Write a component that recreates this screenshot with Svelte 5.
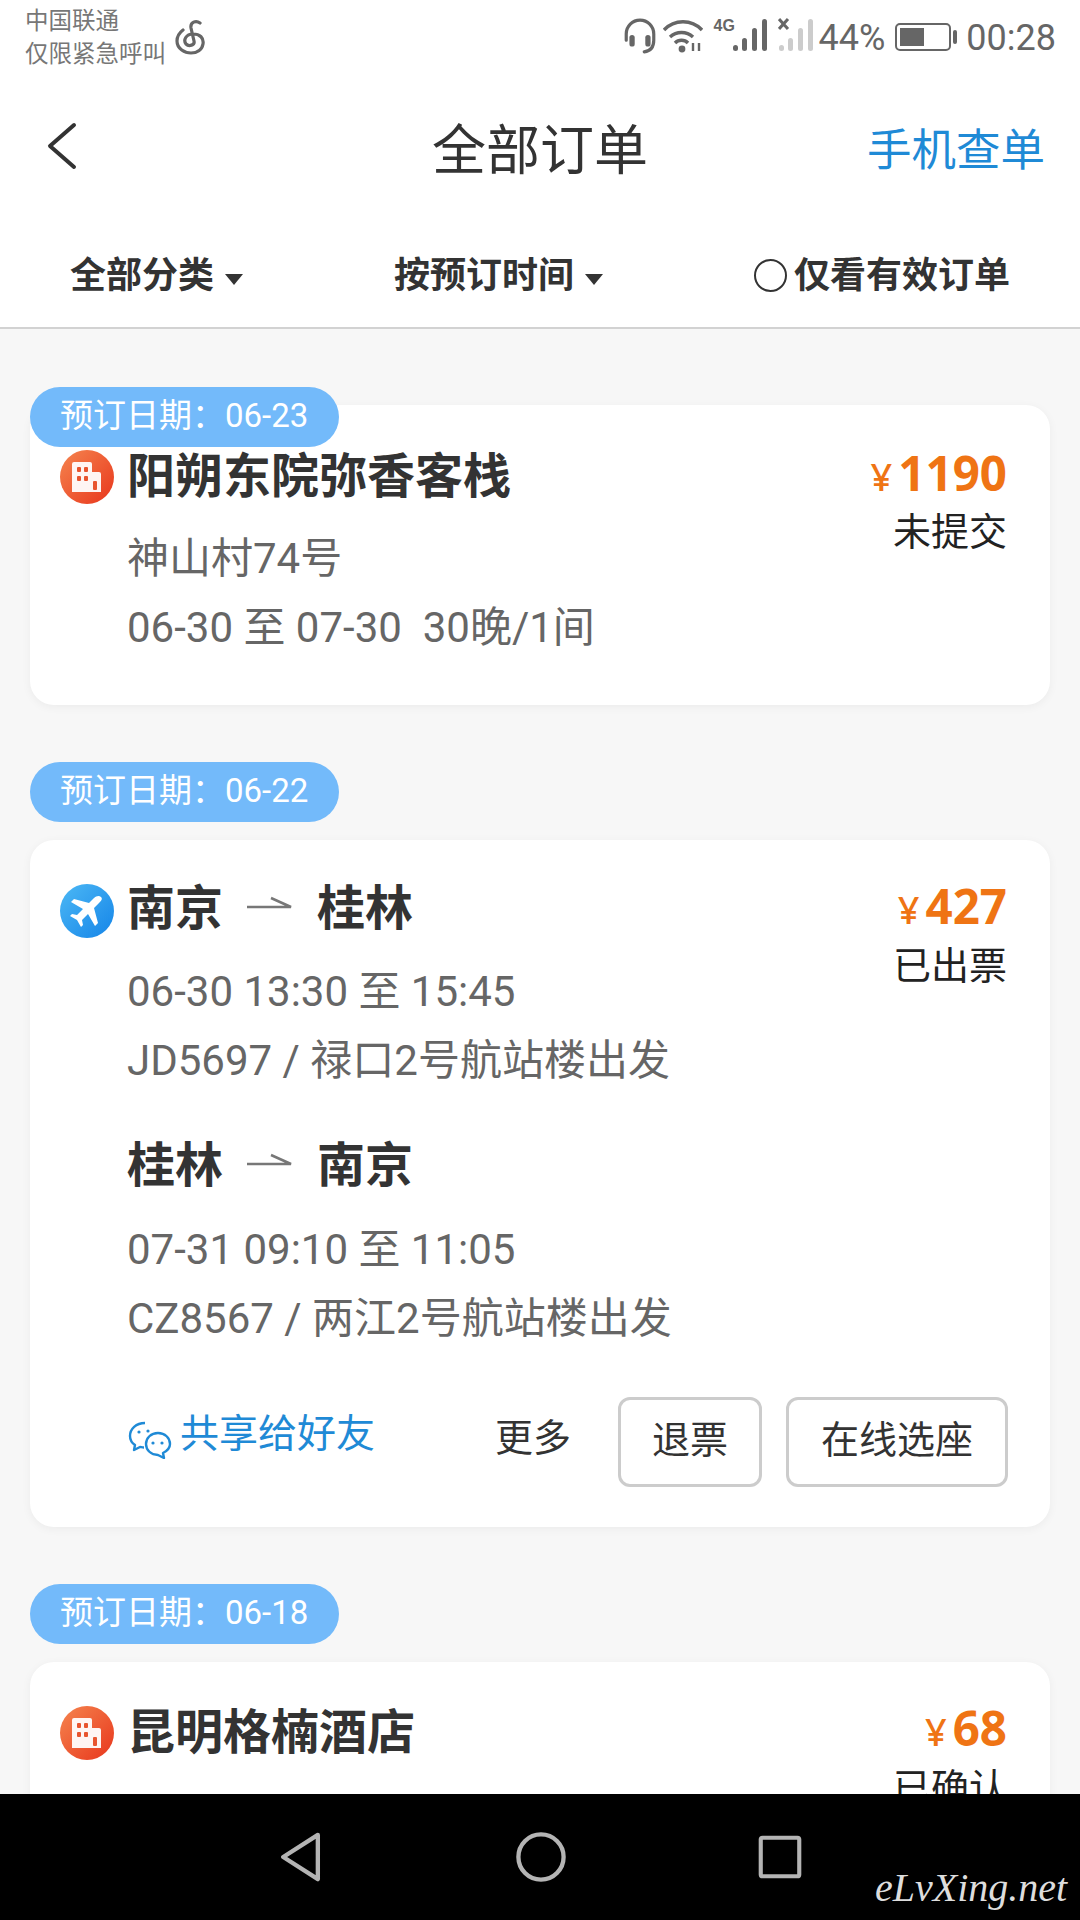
<script lang="ts">
  // Order list page: status bar, title bar, filters, cards, system nav.
  interface Leg { from: string; to: string; lines: string[] }
  const flightLegs: Leg[] = [
    { from: "南京", to: "桂林", lines: ["06-30 13:30 至 15:45", "JD5697 / 禄口2号航站楼出发"] },
    { from: "桂林", to: "南京", lines: ["07-31 09:10 至 11:05", "CZ8567 / 两江2号航站楼出发"] },
  ];
</script>

{#snippet hotelIcon()}
  <svg class="type-icon" viewBox="0 0 54 54">
    <defs>
      <linearGradient id="hotel-grad" x1="0" y1="0" x2="1" y2="1">
        <stop offset="0" stop-color="#f5854f" />
        <stop offset="1" stop-color="#e8361c" />
      </linearGradient>
    </defs>
    <circle cx="27" cy="27" r="27" fill="url(#hotel-grad)" />
    <path d="M12 14q0-2 2-2h16q2 0 2 2v8h7q2 0 2 2v18H12z" fill="#fff" fill-opacity=".94" />
    <g fill="#e8552f">
      <rect x="17" y="17" width="4" height="5" rx="1" /><rect x="24" y="17" width="4" height="5" rx="1" />
      <rect x="17" y="26" width="4" height="5" rx="1" /><rect x="24" y="26" width="4" height="5" rx="1" />
      <rect x="33" y="31" width="4" height="9" rx="1" />
    </g>
  </svg>
{/snippet}

{#snippet legArrow()}
  <svg class="leg-arrow" viewBox="0 0 46 16">
    <path d="M0 11h44L24 2" fill="none" stroke="#777" stroke-width="2.5" />
  </svg>
{/snippet}

<div class="page">
  <header class="status">
    <div class="carrier">
      <span>中国联通</span>
      <span>仅限紧急呼叫</span>
    </div>
    <svg class="music" viewBox="0 0 36 36">
      <path d="M27 4c-4-3-10-1-9 5l3 13c1 4-5 6-8 3-3-4 0-10 7-10 7 0 11 4 10 10-1 6-6 9-12 9S4 30 4 22c0-4 2-8 6-11" fill="none" stroke="#666" stroke-width="3.2" stroke-linecap="round" />
    </svg>
    <div class="status-right">
      <svg class="st-headset" viewBox="0 0 32 34">
        <path d="M3 21v-6a13 13 0 0 1 26 0v6c0 6-2 10-9 11" fill="none" stroke="#666" stroke-width="3" stroke-linecap="round" />
        <rect x="6" y="16" width="5" height="11" rx="2.5" fill="#666" />
        <rect x="21" y="16" width="5" height="11" rx="2.5" fill="#666" />
      </svg>
      <svg class="st-wifi" viewBox="0 0 40 34">
        <g fill="none" stroke="#666" stroke-width="3.4">
          <path d="M1 11a26 26 0 0 1 38 0" />
          <path d="M7 18a17 17 0 0 1 23 0" />
          <path d="M12 24a9 9 0 0 1 13 0" />
        </g>
        <circle cx="19" cy="30" r="3.4" fill="#666" />
        <path d="M30 24v8M36 24v8" stroke="#666" stroke-width="2.4" />
      </svg>
      <div class="st-signal">
        <span class="st-4g">4G</span>
        <svg viewBox="0 0 36 34" class="st-bars">
          <g fill="#666"><rect x="1" y="27" width="5" height="6" rx="2.5" /><rect x="10" y="20" width="5" height="13" rx="2.5" /><rect x="20" y="10" width="5" height="23" rx="2.5" /><rect x="30" y="1" width="5" height="32" rx="2.5" /></g>
        </svg>
      </div>
      <svg class="st-bars st-off" viewBox="0 0 36 34">
        <path d="M1 1l9 10M10 1L1 11" stroke="#666" stroke-width="3" />
        <g fill="#ccc"><rect x="1" y="27" width="5" height="6" rx="2.5" /><rect x="10" y="20" width="5" height="13" rx="2.5" /><rect x="20" y="10" width="5" height="23" rx="2.5" /><rect x="30" y="1" width="5" height="32" rx="2.5" /></g>
      </svg>
      <span class="st-text">44%</span>
      <div class="battery"><div class="battery-fill"></div></div>
      <div class="battery-nub"></div>
      <span class="st-text st-time">00:28</span>
    </div>
  </header>

  <div class="titlebar">
    <svg class="back" viewBox="0 0 30 48">
      <path d="M27 3L3 24l24 21" fill="none" stroke="#333" stroke-width="4" stroke-linecap="round" stroke-linejoin="round" />
    </svg>
    <h1>全部订单</h1>
    <span class="title-link">手机查单</span>
  </div>

  <div class="filters">
    <span class="filter">全部分类<i class="caret"></i></span>
    <span class="filter">按预订时间<i class="caret"></i></span>
    <span class="filter check"><i class="radio"></i>仅看有效订单</span>
  </div>

  <main class="list">
    <section class="group first">
      <div class="pill">预订日期：06-23</div>
      <article class="card">
        <div class="head">
          {@render hotelIcon()}
          <h2>阳朔东院弥香客栈</h2>
          <div class="price"><small>¥</small>1190</div>
        </div>
        <div class="body">
          <div class="status-label">未提交</div>
          <p>神山村74号</p>
          <p class="pre">06-30 至 07-30  30晚/1间</p>
        </div>
      </article>
    </section>

    <section class="group">
      <div class="pill">预订日期：06-22</div>
      <article class="card">
        {#each flightLegs as leg, i}
          <div class="head" class:leg-next={i > 0}>
            {#if i === 0}
              <svg class="type-icon" viewBox="0 0 54 54">
                <defs>
                  <linearGradient id="plane-grad" x1="0" y1="0" x2="1" y2="1">
                    <stop offset="0" stop-color="#4cb8f5" />
                    <stop offset="1" stop-color="#1585e8" />
                  </linearGradient>
                </defs>
                <circle cx="27" cy="27" r="27" fill="url(#plane-grad)" />
                <path d="M41 13c-2-2-5-1-7 1l-5 5-15-4-3 3 12 7-6 6-5-1-2 2 7 4 4 7 2-2-1-5 6-6 7 12 3-3-4-15 5-5c2-2 4-4 2-6z" fill="#fff" />
              </svg>
            {/if}
            <h2 class="route"><span>{leg.from}</span>{@render legArrow()}<span>{leg.to}</span></h2>
            {#if i === 0}
              <div class="price"><small>¥</small>427</div>
            {/if}
          </div>
          <div class="body">
            {#if i === 0}
              <div class="status-label">已出票</div>
            {/if}
            {#each leg.lines as line}
              <p>{line}</p>
            {/each}
          </div>
        {/each}
        <div class="actions">
          <span class="share">
            <svg viewBox="0 0 44 38" class="share-icon">
              <g fill="none" stroke="#1f8ad6" stroke-width="2.4" stroke-linejoin="round">
                <path d="M17 2C8 2 2 8 2 15c0 4 2 7 5 9l-1 5 6-3c1 0 2 .5 4 .5" />
                <path d="M30 12c-7 0-12 5-12 11s5 11 12 11l6 3-1-5c4-2 7-5 7-9 0-6-5-11-12-11z" fill="#fff" />
              </g>
              <g fill="#1f8ad6"><circle cx="11" cy="11" r="1.6" /><circle cx="20" cy="10" r="1.6" /><circle cx="25" cy="22" r="1.6" /><circle cx="34" cy="22" r="1.6" /></g>
            </svg>
            共享给好友
          </span>
          <span class="more">更多</span>
          <button type="button" class="btn btn-refund">退票</button>
          <button type="button" class="btn btn-seat">在线选座</button>
        </div>
      </article>
    </section>

    <section class="group">
      <div class="pill">预订日期：06-18</div>
      <article class="card">
        <div class="head">
          {@render hotelIcon()}
          <h2>昆明格楠酒店</h2>
          <div class="price"><small>¥</small>68</div>
        </div>
        <div class="body">
          <div class="status-label">已确认</div>
        </div>
      </article>
    </section>
  </main>

  <footer class="sysnav">
    <svg class="nav-back" viewBox="0 0 46 52">
      <path d="M40 3L4 26l36 23z" fill="none" stroke="#b4b4b4" stroke-width="4.5" stroke-linejoin="round" />
    </svg>
    <svg class="nav-home" viewBox="0 0 52 52">
      <circle cx="26" cy="26" r="23.5" fill="none" stroke="#b4b4b4" stroke-width="4.5" />
    </svg>
    <svg class="nav-recent" viewBox="0 0 48 48">
      <rect x="3" y="3" width="42" height="42" rx="2" fill="none" stroke="#b4b4b4" stroke-width="4.5" />
    </svg>
    <span class="watermark">eLvXing.net</span>
  </footer>
</div>

<style>
  :global(body) { margin: 0; background: #f7f7f7; }
  .page { width: 1080px; height: 1920px; display: flex; flex-direction: column; overflow: hidden; background: #f7f7f7; font-family: Roboto, "Noto Sans CJK SC", sans-serif; color: #333; }

  .status { flex: none; height: 84px; background: #fff; display: flex; align-items: flex-start; padding: 0 24px 0 25px; box-sizing: border-box; color: #666; }
  .carrier { display: flex; flex-direction: column; font-size: 23.5px; line-height: 33px; padding-top: 5px; color: #777; }
  .music { width: 36px; height: 36px; margin: 19px 0 0 7px; }
  .status-right { margin-left: auto; display: flex; align-items: flex-start; padding-top: 18px; }
  .st-headset { width: 36px; height: 36px; }
  .st-wifi { width: 40px; height: 36px; margin-left: 5px; }
  .st-signal { position: relative; width: 54px; height: 34px; margin-left: 11px; display: flex; justify-content: flex-end; }
  .st-4g { position: absolute; left: 0; top: 0; font-size: 16px; line-height: 16px; font-weight: 700; font-family: "Liberation Sans", sans-serif; color: #666; }
  .st-bars { width: 36px; height: 34px; }
  .st-off { margin-left: 10px; }
  .st-text { font-size: 36px; line-height: 40px; margin-left: 5px; color: #666; }
  .battery { width: 56px; height: 28px; margin: 5px 0 0 10px; border: 2px solid #666; border-radius: 5px; box-sizing: border-box; padding: 3px; background: #fff; }
  .battery-fill { width: 24px; height: 100%; background: #666; }
  .battery-nub { width: 4px; height: 14px; margin: 12px 0 0 2px; background: #666; border-radius: 2px; }
  .st-time { margin-left: 9px; }

  .titlebar { flex: none; height: 128px; background: #fff; position: relative; display: flex; align-items: center; justify-content: space-between; padding: 0 35px 4px 47px; box-sizing: border-box; }
  .back { width: 30px; height: 48px; }
  h1 { position: absolute; left: 0; right: 0; margin: 0; text-align: center; font-size: 54px; font-weight: 400; color: #333; }
  .title-link { font-size: 44.5px; color: #1f8ad6; }

  .filters { flex: none; height: 117px; padding: 4px 70px 0 70px; background: #fff; border-bottom: 2px solid #d2d2d2; display: flex; align-items: center; justify-content: space-between; box-sizing: border-box; }
  .filter { display: flex; align-items: center; font-size: 36px; font-weight: 700; color: #333; }
  .caret { width: 0; height: 0; margin: 15px 0 0 11px; border-left: 9px solid transparent; border-right: 9px solid transparent; border-top: 11px solid #333; }
  .radio { width: 33px; height: 33px; margin: 7px 7px 0 0; border: 2px solid #333; border-radius: 50%; box-sizing: border-box; }

  .list { flex: 1; min-height: 0; overflow: hidden; padding: 58px 30px 0; display: flex; flex-direction: column; gap: 57px; }
  .group { flex: none; display: flex; flex-direction: column; align-items: flex-start; gap: 18px; }
  .group.first { gap: 0; }
  .group.first .card { margin-top: -42px; padding-bottom: 43px; }
  .pill { position: relative; z-index: 1; width: 309px; height: 60px; padding-left: 30px; box-sizing: border-box; border-radius: 30px; background: #73bafa; color: #fff; font-size: 33px; line-height: 57px; }

  .card { width: 100%; padding: 33px 43px 40px 30px; box-sizing: border-box; background: #fff; border-radius: 24px; box-shadow: 0 2px 10px rgba(0, 0, 0, .05); }
  .group.first .head { margin-top: 1px; }
  .head { display: flex; align-items: center; height: 66px; padding-left: 67px; position: relative; }
  .leg-next { margin-top: 35px; }
  .type-icon { position: absolute; left: 0; top: 11px; width: 54px; height: 54px; }
  h2 { margin: 0; font-size: 48px; font-weight: 700; color: #333; white-space: nowrap; }
  .route { display: flex; align-items: center; margin-top: -4px; }
  .leg-arrow { width: 46px; height: 16px; margin: 0 24px 0 24px; }
  .price { margin-left: auto; font-family: "Noto Sans", Roboto, sans-serif; font-size: 47.5px; font-weight: 700; color: #ef7414; }
  .price small { font-size: 38px; margin-right: 6px; font-weight: 500; }

  .body { position: relative; padding: 18.5px 0 0 67px; }
  .status-label { position: absolute; right: 0; top: -3px; font-size: 38px; line-height: 60px; color: #222; }
  .body p { margin: 0; height: 69px; font-size: 42px; line-height: 69px; color: #666; }
  .pre { white-space: pre; }

  .actions { display: flex; align-items: center; margin: 44px -1px 0 68px; }
  .share { display: flex; align-items: center; font-size: 39px; line-height: 48px; color: #1f8ad6; margin-top: -15px; }
  .share-icon { width: 44px; height: 38px; margin: 12px 8px 0 0; }
  .more { margin-left: auto; margin-bottom: 14px; font-size: 38px; color: #333; }
  .btn { height: 90px; padding: 0 0 10px; border: 3px solid #ccc; border-radius: 12px; background: #fff; font-family: inherit; font-size: 38px; color: #333; }
  .btn-refund { width: 144px; margin-left: 47px; }
  .btn-seat { width: 222px; margin-left: 24px; }

  .sysnav { flex: none; height: 126px; background: #000; position: relative; z-index: 2; display: flex; align-items: flex-start; justify-content: center; gap: 192px; padding-top: 38px; box-sizing: border-box; }
  .nav-back { width: 45px; height: 50px; }
  .nav-home { width: 50px; height: 50px; }
  .nav-recent { width: 44px; height: 44px; margin-top: 3px; }
  .watermark { position: absolute; left: 875px; top: 70px; font-family: "Liberation Serif", serif; font-style: italic; font-size: 40px; color: #ddd; white-space: nowrap; }
</style>
